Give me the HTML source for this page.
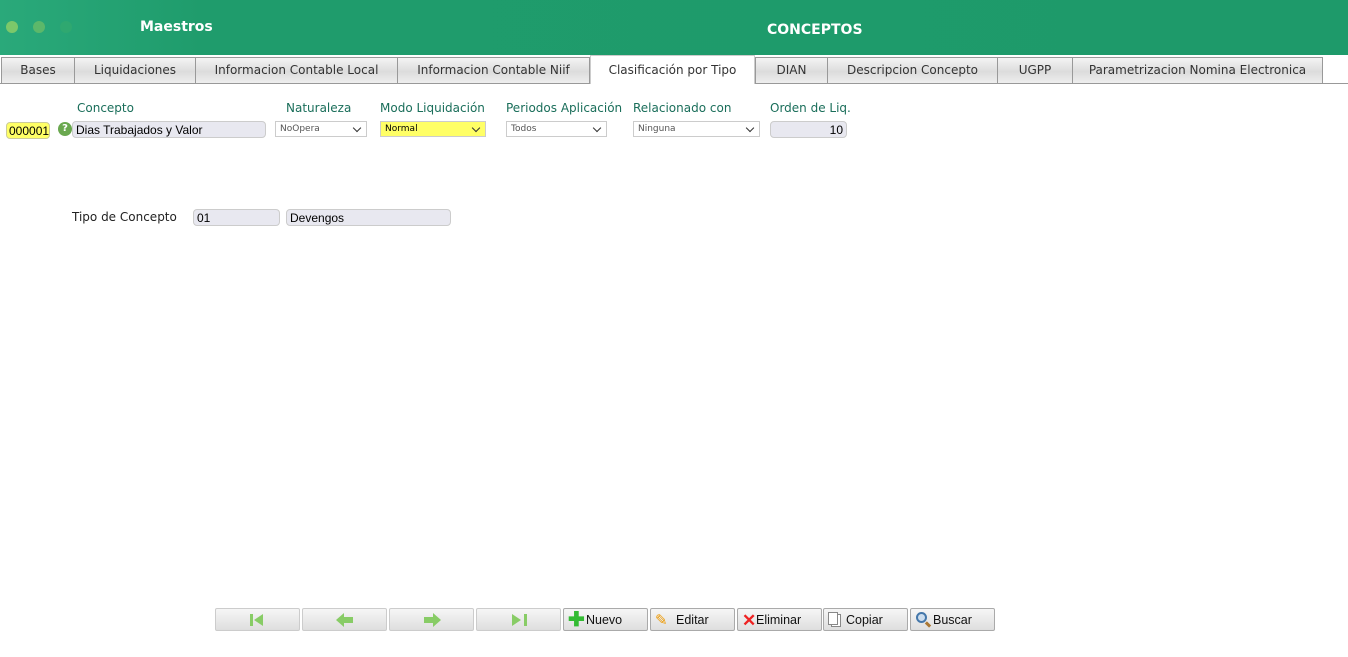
<!DOCTYPE html>
<html><head><meta charset="utf-8"><style>
*{box-sizing:border-box;margin:0;padding:0}
body{width:1348px;height:657px;background:#fff;font-family:"DejaVu Sans","Liberation Sans",sans-serif;position:relative;overflow:hidden}
.hdr{position:absolute;left:0;top:0;width:1348px;height:55px;background:linear-gradient(90deg,#2aa97a 0%,#1f9c6c 15%,#1e9a6a 100%)}
.dot{position:absolute;top:21px;width:12px;height:12px;border-radius:50%}
.ht{position:absolute;color:#fff;font-weight:bold;font-size:14px}
.tab{position:absolute;top:57px;height:27px;border:1px solid #999;background:linear-gradient(#f4f4f4,#dcdcdc 55%,#eee);font-size:12px;color:#333;text-align:center;line-height:25px}
.tab.a{top:55px;height:29px;background:#fff;border-color:#ccc;border-bottom:none;line-height:29px}
.line{position:absolute;left:0;top:83px;width:1348px;height:1px;background:#999}
.lbl{position:absolute;font-size:12px;color:#1a6e5a;top:101px}
.in{position:absolute;height:17px;border:1px solid #ccc;border-radius:4px;background:#e8e8f0;font-family:"Liberation Sans",sans-serif;font-size:12px;padding-left:3px;line-height:16px;color:#000}
.sel{position:absolute;top:121px;height:16px;border:1px solid #ccc;background:#fff;font-size:9px;color:#555;padding-left:4px;line-height:15px}
.sel:after{content:"";position:absolute;right:6px;top:3px;width:5px;height:5px;border-right:1.5px solid #333;border-bottom:1.5px solid #333;transform:rotate(45deg)}
.btn{position:absolute;top:608px;width:85px;height:23px;border:1px solid #aaa;border-radius:2px;background:linear-gradient(#f6f6f6,#dedede);font-family:"Liberation Sans",sans-serif;font-size:12.5px;color:#111;line-height:23px}
.btn.d{border-color:#ccc}
</style></head><body>
<div class="hdr">
<div class="dot" style="left:6px;background:#7cc86a"></div>
<div class="dot" style="left:33px;background:#5cb86a"></div>
<div class="dot" style="left:60px;background:#2fa870"></div>
<div class="ht" style="left:140px;top:19px">Maestros</div>
<div class="ht" style="left:767px;top:22px">CONCEPTOS</div>
</div>
<div class="line"></div>
<div class="tab" style="left:1px;width:74px">Bases</div>
<div class="tab" style="left:74px;width:122px">Liquidaciones</div>
<div class="tab" style="left:195px;width:203px">Informacion Contable Local</div>
<div class="tab" style="left:397px;width:193px">Informacion Contable Niif</div>
<div class="tab a" style="left:590px;width:165px">Clasificación por Tipo</div>
<div class="tab" style="left:755px;width:73px">DIAN</div>
<div class="tab" style="left:827px;width:171px">Descripcion Concepto</div>
<div class="tab" style="left:997px;width:76px">UGPP</div>
<div class="tab" style="left:1072px;width:251px">Parametrizacion Nomina Electronica</div>

<div class="lbl" style="left:77px">Concepto</div>
<div class="lbl" style="left:286px">Naturaleza</div>
<div class="lbl" style="left:380px">Modo Liquidación</div>
<div class="lbl" style="left:506px">Periodos Aplicación</div>
<div class="lbl" style="left:633px">Relacionado con</div>
<div class="lbl" style="left:770px">Orden de Liq.</div>

<div class="in" style="left:6px;top:122px;width:44px;background:#ffff66;border-color:#cc9;padding-left:2px">000001</div>
<div style="position:absolute;left:58px;top:122px;width:14px;height:14px;border-radius:50%;background:#6aa84f;color:#fff;font-size:10px;font-weight:bold;text-align:center;line-height:14px">?</div>
<div class="in" style="left:72px;top:121px;width:194px">Dias Trabajados y Valor</div>
<div class="sel" style="left:275px;width:92px">NoOpera</div>
<div class="sel" style="left:380px;width:106px;background:#ffff66;color:#000">Normal</div>
<div class="sel" style="left:506px;width:101px">Todos</div>
<div class="sel" style="left:633px;width:127px">Ninguna</div>
<div class="in" style="left:770px;top:121px;width:77px;text-align:right;padding-right:3px">10</div>

<div style="position:absolute;left:72px;top:210px;font-size:12px;color:#222">Tipo de Concepto</div>
<div class="in" style="left:193px;top:209px;width:87px">01</div>
<div class="in" style="left:286px;top:209px;width:165px">Devengos</div>

<div class="btn d" style="left:215px"><svg width="85" height="22"><rect x="34" y="5" width="3" height="12" fill="#8c6"/><path d="M47 5 L38 11 L47 17Z" fill="#8c6"/></svg></div>
<div class="btn d" style="left:302px"><svg width="85" height="22"><path d="M33 11 L41 4 V8 H50 V14 H41 V18Z" fill="#8c6"/></svg></div>
<div class="btn d" style="left:389px"><svg width="85" height="22"><path d="M51 11 L43 4 V8 H34 V14 H43 V18Z" fill="#8c6"/></svg></div>
<div class="btn d" style="left:476px"><svg width="85" height="22"><rect x="47" y="5" width="3" height="12" fill="#8c6"/><path d="M35 5 L44 11 L35 17Z" fill="#8c6"/></svg></div>
<div class="btn" style="left:563px"><span style="color:#3b3;font-weight:bold;font-size:20px;position:absolute;left:4px;top:0">✚</span><span style="position:absolute;left:22px">Nuevo</span></div>
<div class="btn" style="left:650px"><span style="color:#e90;font-size:15px;position:absolute;left:4px;top:0">✎</span><span style="position:absolute;left:25px">Editar</span></div>
<div class="btn" style="left:737px"><span style="color:#e22;font-weight:bold;font-size:17px;position:absolute;left:4px;top:0">✕</span><span style="position:absolute;left:18px">Eliminar</span></div>
<div class="btn" style="left:823px"><span style="position:absolute;left:7px;top:5px;width:10px;height:13px;border:1px solid #888;background:#fff"></span><span style="position:absolute;left:4px;top:3px;width:10px;height:13px;border:1px solid #888;background:#fff"></span><span style="position:absolute;left:22px">Copiar</span></div>
<div class="btn" style="left:910px"><span style="position:absolute;left:5px;top:3px;width:11px;height:11px;border:2px solid #47a;border-radius:50%;background:#cde"></span><span style="position:absolute;left:14px;top:14px;width:6px;height:3px;background:#a73;transform:rotate(45deg)"></span><span style="position:absolute;left:22px">Buscar</span></div>
</body></html>
